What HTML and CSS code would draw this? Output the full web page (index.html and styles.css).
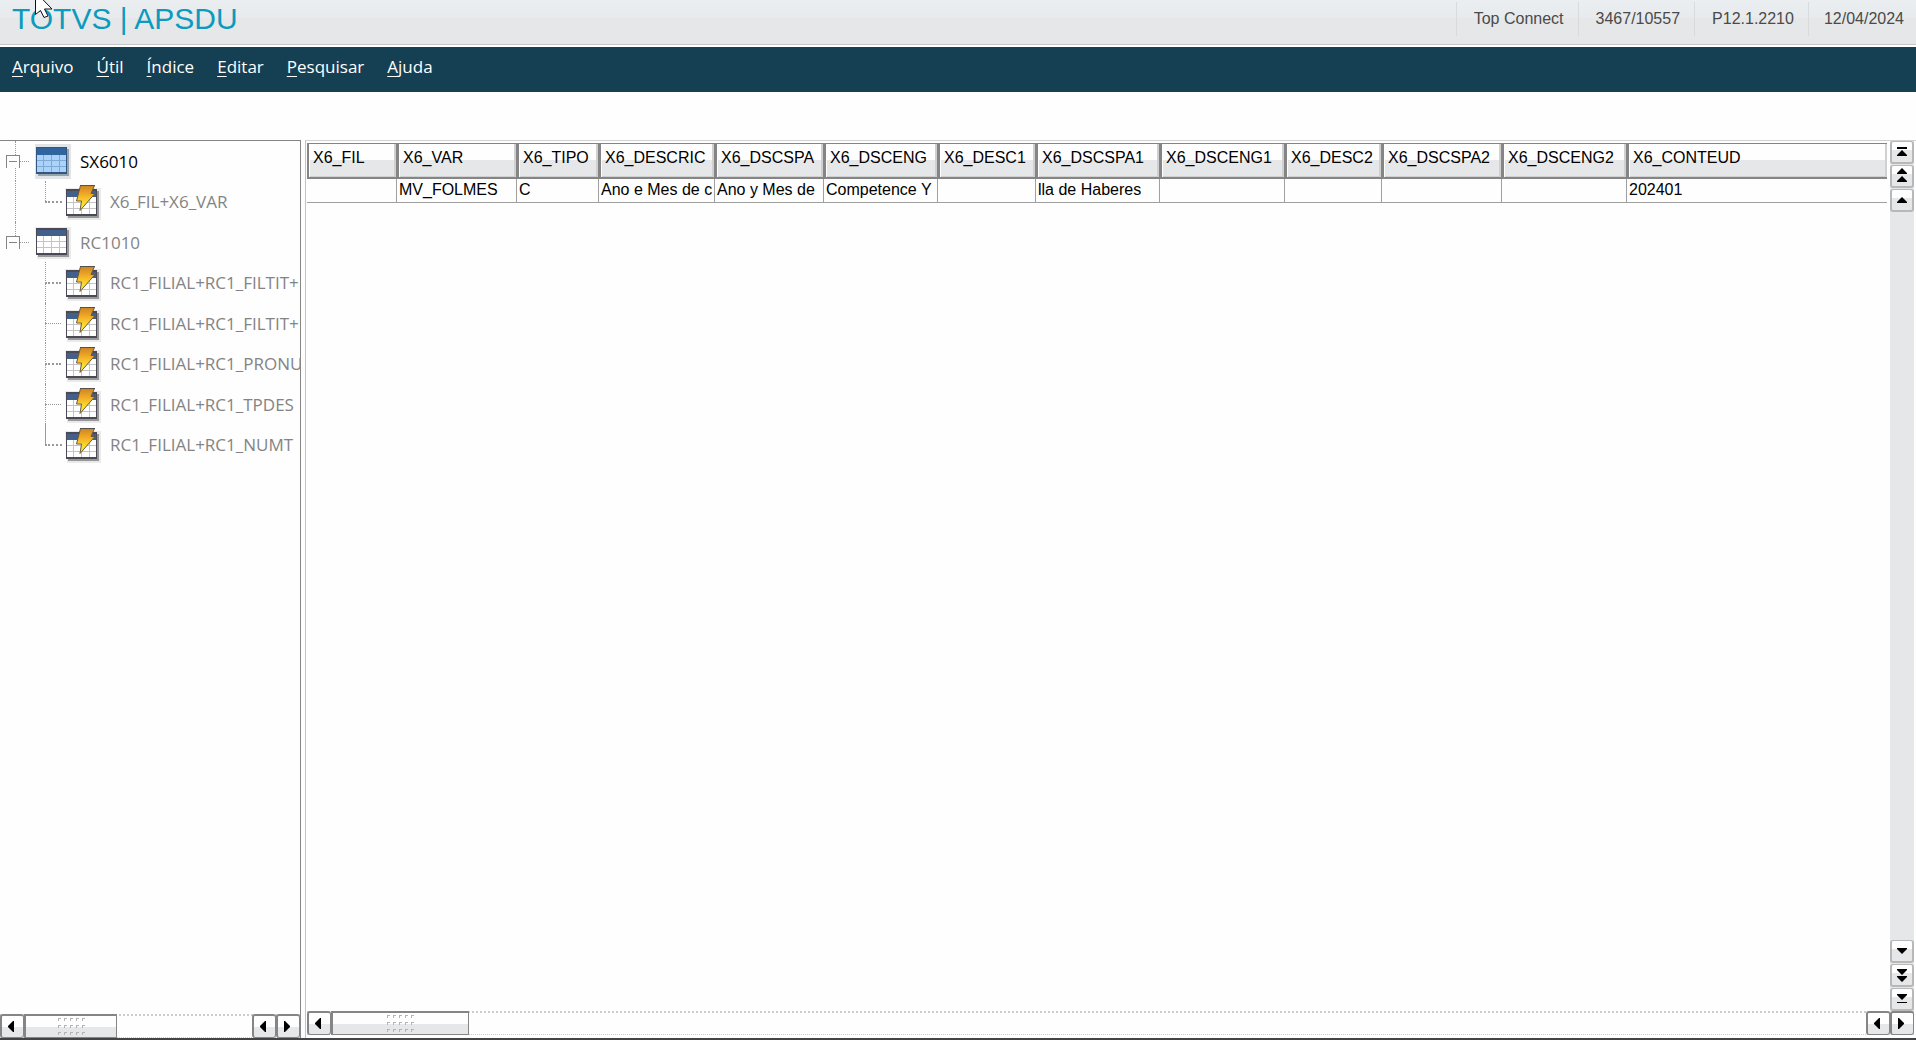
FILE: index.html
```
<!DOCTYPE html>
<html lang="pt-BR">
<head>
    <meta charset="UTF-8">
    <meta name="viewport" content="width=device-width, initial-scale=1.0">
    <title>TOTVS | APSDU</title>
    <link rel="stylesheet" href="styles.css">
</head>
<body>
    <!-- Shared icons -->
    <svg class="sprite" aria-hidden="true">
        <defs>
            <linearGradient id="boltFill" x1="0" y1="0" x2="0" y2="1">
                <stop offset="0" stop-color="#cd8423"/>
                <stop offset="0.35" stop-color="#f0aa26"/>
                <stop offset="0.7" stop-color="#fddc2c"/>
                <stop offset="1" stop-color="#f7ee4c"/>
            </linearGradient>
            <pattern id="grip" width="6" height="7" patternUnits="userSpaceOnUse">
                <path d="M0 0h3v1H1v2H0z" fill="#b4b4b4"/>
            </pattern>
        </defs>
        <symbol id="grid" viewBox="0 0 36 36">
            <path d="M0 3h36v32H2z" fill="#000" opacity="0.08"/>
            <path d="M3 6h31v27H3z" fill="#000" opacity="0.35"/>
            <path d="M1 4h31v27H1z" fill="#4a4a56"/>
            <path d="M2 6h29v6H2z" fill="#435f8c"/>
            <path d="M2 12h29v17H2z" fill="#fff"/>
            <path d="M2 17.500h29M2 23.500h29M8.500 12v17M16.500 12v17M24.500 12v17" stroke="#c4c4c4" fill="none"/>
        </symbol>
        <symbol id="gridActive" viewBox="0 0 36 36">
            <path d="M0 1h36v35H0z" fill="#e2e5e7"/>
            <path d="M3 6h31v27H3z" fill="#98a2ab"/>
            <path d="M1 4h31v27H1z" fill="#31567f"/>
            <path d="M2 5h29v7H2z" fill="#2f649f"/>
            <path d="M2 12h29v17H2z" fill="#abd2fb"/>
            <path d="M2 17.500h29M2 23.500h29M8.500 12v17M16.500 12v17M24.500 12v17" stroke="#7fa8d2" fill="none"/>
        </symbol>
        <symbol id="gridBolt" viewBox="0 0 36 36">
            <use href="#grid"/>
            <path d="M15.500 0.500h14l-3.500 8h4L15 25.500l1.500-9.500h-5z" fill="url(#boltFill)" stroke="#6b5a3a"/>
            <path d="M15 0.500h15" stroke="#55504c"/>
        </symbol>
    </svg>

    <header class="topbar">
        <h1>TOTVS | APSDU</h1>
        <ul class="status">
            <li>Top Connect</li>
            <li>3467/10557</li>
            <li>P12.1.2210</li>
            <li>12/04/2024</li>
        </ul>
    </header>

    <nav class="menu">
        <a href="#"><u>A</u>rquivo</a>
        <a href="#"><u>Ú</u>til</a>
        <a href="#"><u>Í</u>ndice</a>
        <a href="#"><u>E</u>ditar</a>
        <a href="#"><u>P</u>esquisar</a>
        <a href="#"><u>A</u>juda</a>
    </nav>

    <main class="workspace">
        <aside class="sidebar">
            <ul class="tree">
                <li class="root active"><button class="toggle" aria-label="Recolher SX6010"></button><svg class="icon"><use href="#gridActive"/></svg><span>SX6010</span></li>
                <li class="child last"><svg class="icon"><use href="#gridBolt"/></svg><span>X6_FIL+X6_VAR</span></li>
                <li class="root end"><button class="toggle" aria-label="Recolher RC1010"></button><svg class="icon"><use href="#grid"/></svg><span>RC1010</span></li>
                <li class="child"><svg class="icon"><use href="#gridBolt"/></svg><span>RC1_FILIAL+RC1_FILTIT+</span></li>
                <li class="child"><svg class="icon"><use href="#gridBolt"/></svg><span>RC1_FILIAL+RC1_FILTIT+</span></li>
                <li class="child"><svg class="icon"><use href="#gridBolt"/></svg><span>RC1_FILIAL+RC1_PRONU</span></li>
                <li class="child"><svg class="icon"><use href="#gridBolt"/></svg><span>RC1_FILIAL+RC1_TPDES</span></li>
                <li class="child last"><svg class="icon"><use href="#gridBolt"/></svg><span>RC1_FILIAL+RC1_NUMT</span></li>
            </ul>
            <div class="hscroll">
                <button aria-label="Esquerda"><svg viewBox="0 0 20 20"><path d="M12 4v11h-1L6 10V9l5-5z"/></svg></button>
                <div class="thumb"><svg class="grip"><rect width="27" height="17" fill="url(#grip)"/></svg></div>
                <button class="push" aria-label="Esquerda"><svg viewBox="0 0 20 20"><path d="M12 4v11h-1L6 10V9l5-5z"/></svg></button>
                <button aria-label="Direita"><svg viewBox="0 0 20 20"><path d="M6 4v11h1l5-5V9L7 4z"/></svg></button>
            </div>
        </aside>

        <section class="browse">
            <div class="browse-body">
                <div class="table-wrap">
                    <table>
                        <colgroup>
                            <col class="c1"><col class="c2"><col class="c3"><col class="c4"><col class="c5"><col class="c6"><col class="c7">
                            <col class="c8"><col class="c9"><col class="c10"><col class="c11"><col class="c12"><col>
                        </colgroup>
                        <thead>
                            <tr>
                                <th>X6_FIL</th>
                                <th>X6_VAR</th>
                                <th>X6_TIPO</th>
                                <th>X6_DESCRIC</th>
                                <th>X6_DSCSPA</th>
                                <th>X6_DSCENG</th>
                                <th>X6_DESC1</th>
                                <th>X6_DSCSPA1</th>
                                <th>X6_DSCENG1</th>
                                <th>X6_DESC2</th>
                                <th>X6_DSCSPA2</th>
                                <th>X6_DSCENG2</th>
                                <th>X6_CONTEUD</th>
                            </tr>
                        </thead>
                        <tbody>
                            <tr>
                                <td></td>
                                <td>MV_FOLMES</td>
                                <td>C</td>
                                <td>Ano e Mes de c</td>
                                <td>Ano y Mes de</td>
                                <td>Competence Y</td>
                                <td></td>
                                <td>lla de Haberes</td>
                                <td></td>
                                <td></td>
                                <td></td>
                                <td></td>
                                <td>202401</td>
                            </tr>
                        </tbody>
                    </table>
                </div>
                <div class="vscroll">
                    <button aria-label="Primeiro"><svg viewBox="0 0 20 20"><path d="M5 5h10v2H5zM10 8l5 5v1H5v-1z"/></svg></button>
                    <button aria-label="Página anterior"><svg viewBox="0 0 20 20"><path d="M10 2l5 5v1H5V7zM10 10l5 5v1H5v-1z"/></svg></button>
                    <button aria-label="Anterior"><svg viewBox="0 0 20 20"><path d="M10 7l5 5v1H5v-1z"/></svg></button>
                    <button class="push" aria-label="Próximo"><svg viewBox="0 0 20 20"><path d="M5 7h10v1l-5 5-5-5z"/></svg></button>
                    <button aria-label="Próxima página"><svg viewBox="0 0 20 20"><path d="M5 4h10v1l-5 5-5-5zM5 11h10v1l-5 5-5-5z"/></svg></button>
                    <button aria-label="Último"><svg viewBox="0 0 20 20"><path d="M5 5h10v1l-5 5-5-5zM5 13h10v1H5z"/></svg></button>
                </div>
            </div>
            <div class="hscroll">
                <button aria-label="Esquerda"><svg viewBox="0 0 20 20"><path d="M12 4v11h-1L6 10V9l5-5z"/></svg></button>
                <div class="thumb wide"><svg class="grip"><rect width="27" height="17" fill="url(#grip)"/></svg></div>
                <button class="push" aria-label="Esquerda"><svg viewBox="0 0 20 20"><path d="M12 4v11h-1L6 10V9l5-5z"/></svg></button>
                <button aria-label="Direita"><svg viewBox="0 0 20 20"><path d="M6 4v11h1l5-5V9L7 4z"/></svg></button>
            </div>
        </section>
    </main>

    <svg class="cursor" viewBox="0 0 18 18" aria-hidden="true"><path d="M0.500 -8v22.500l5-4 3.500 7 4-1.500-3.500-7h7.500z" fill="#fff" stroke="#111"/></svg>
</body>
</html>
```

FILE: styles.css
```
* {
    margin: 0;
    padding: 0;
    box-sizing: border-box;
}

body {
    height: 100vh;
    display: flex;
    flex-direction: column;
    overflow: hidden;
    background: #fefefe;
    border-bottom: 2px solid #444;
    font-family: "Liberation Sans", Arial, sans-serif;
    font-size: 16px;
    color: #000;
}

ul {
    list-style: none;
}

.sprite {
    position: absolute;
    width: 0;
    height: 0;
}

.cursor {
    position: absolute;
    top: 0;
    left: 35px;
    width: 18px;
    height: 18px;
}

/* Top bar */
.topbar {
    height: 47px;
    flex: none;
    display: flex;
    justify-content: space-between;
    background: linear-gradient(#eaeef1, #e8ebed 18px, #e6e7e8 18px);
    border-bottom: 2px solid #fff;
    box-shadow: inset 0 -1px #c3c7cc;
}

.topbar h1 {
    padding-left: 12px;
    font-size: 30px;
    font-weight: normal;
    line-height: 38px;
    color: #0c9abe;
}

.status {
    display: flex;
    padding-top: 2px;
    color: #4a4a4a;
}

.status li {
    height: 34px;
    padding: 0 14px 0 17px;
    border-left: 1px solid #d8dbdd;
    line-height: 34px;
}

.status li:last-child {
    padding: 0 12px 0 15px;
}

/* Menu */
.menu {
    height: 45px;
    flex: none;
    display: flex;
    gap: 23px;
    padding-left: 12px;
    background: #154053;
    font-family: "Open Sans", "Noto Sans", sans-serif;
    font-size: 17px;
    line-height: 40px;
}

.menu a {
    color: #fff;
    text-decoration: none;
}

.menu u {
    text-underline-offset: 3px;
}

/* Work area */
.workspace {
    flex: 1;
    display: flex;
    gap: 4px;
    min-height: 0;
    padding-top: 48px;
}

.sidebar {
    width: 301px;
    flex: none;
    display: flex;
    flex-direction: column;
    border-top: 1px solid #858585;
    border-right: 1px solid #858585;
}

.tree {
    flex: 1;
    overflow: hidden;
    font-family: "Open Sans", "Noto Sans", sans-serif;
    font-size: 17px;
    color: #848484;
}

.tree li {
    position: relative;
    display: flex;
    align-items: center;
    height: 40px;
    white-space: nowrap;
}

.tree li:nth-child(even) {
    height: 41px;
}

.tree .active {
    color: #000;
}

.icon {
    width: 36px;
    height: 36px;
    flex: none;
    margin-right: 9px;
}

.child .icon {
    margin-top: 3px;
}

.root {
    padding-left: 6px;
}

.child {
    padding-left: 65px;
}

.toggle {
    position: relative;
    z-index: 1;
    width: 14px;
    height: 13px;
    margin-right: 15px;
    background: #fefefe;
    border: 1px solid #858585;
    border-bottom: none;
}

.toggle::after {
    content: "";
    display: block;
    height: 1px;
    margin: 0 2px;
    background: #858585;
}

/* Dotted guide lines */
.tree li::before,
.tree li::after {
    content: "";
    position: absolute;
}

.tree li::before {
    left: 15px;
    top: 0;
    bottom: 0;
    border-left: 1px dotted #999;
}

.tree .end::before {
    bottom: 20px;
}

.tree .end ~ li::before {
    left: 45px;
}

.tree li::after {
    left: 20px;
    width: 9px;
    top: 20px;
    border-top: 1px dotted #999;
}

.tree .child::after {
    left: 45px;
    width: 16px;
    top: 0;
    height: 20px;
    border-top: none;
    border-bottom: 2px dotted #999;
}

.tree .child:nth-child(odd)::after {
    border-bottom-width: 1px;
}

.tree .last::after {
    border-left: 1px dotted #999;
}

.tree .end ~ .last::before {
    bottom: 20px;
}

/* Browse */
.browse {
    flex: 1;
    display: flex;
    flex-direction: column;
    min-width: 0;
    padding: 0 2px 3px 1px;
    border-left: 1px solid #c4c4c4;
    border-top: 1px solid #d0d0d0;
}

.browse-body {
    flex: 1;
    display: flex;
    gap: 3px;
    min-height: 0;
}

.table-wrap {
    flex: 1;
    min-width: 0;
    padding-top: 2px;
}

table {
    width: 100%;
    table-layout: fixed;
    border-collapse: separate;
    border-spacing: 0;
}

.c1 { width: 89px; }
.c2 { width: 120px; }
.c3 { width: 82px; }
.c4 { width: 116px; }
.c5 { width: 109px; }
.c6 { width: 114px; }
.c7 { width: 98px; }
.c8 { width: 124px; }
.c9 { width: 125px; }
.c10 { width: 97px; }
.c11 { width: 120px; }
.c12 { width: 125px; }

th,
td {
    overflow: hidden;
    white-space: nowrap;
    font-weight: normal;
    text-align: left;
}

th {
    height: 36px;
    padding: 0 0 6px 4px;
    background: linear-gradient(#fefefe 16px, #e6e7e8 16px);
    border: solid #858585;
    border-width: 1px 0 2px 3px;
    box-shadow: inset 1px 0 #fff, inset -2px -1px #d0d0d0;
}

th:first-child {
    border-left-width: 2px;
}

td {
    height: 24px;
    padding: 0 2px 2px 2px;
    border-left: 1px solid #a0a0a0;
    border-bottom: 1px solid #a0a0a0;
}

td:first-child {
    border-left: none;
}

/* Scroll bars */
.vscroll {
    width: 24px;
    display: flex;
    flex-direction: column;
    gap: 1px;
    background: #e6e7e8;
}

.vscroll button {
    width: 24px;
    height: 23px;
    background: linear-gradient(#fefefe 8px, #e6e7e8 8px);
    border: 2px solid #b8b8b8;
    border-top-width: 1px;
    border-radius: 3px;
}

.hscroll {
    display: flex;
    height: 24px;
    border-top: 2px dotted #ccc;
    border-bottom: 1px dotted #ccc;
}

.hscroll button,
.thumb {
    width: 24px;
    height: 24px;
    margin-top: -2px;
    background: linear-gradient(#fefefe 11px, #e6e7e8 11px);
    border: 2px solid #858585;
    border-width: 2px 1px 1px 2px;
    border-radius: 3px;
}

.vscroll .push {
    margin-top: auto;
}

.hscroll .push {
    margin-left: auto;
}

button svg {
    display: block;
    width: 20px;
    height: 20px;
}

.thumb {
    width: 93px;
    display: flex;
    align-items: center;
    justify-content: center;
    border-radius: 0;
}

.thumb.wide {
    width: 138px;
}

.grip {
    width: 27px;
    height: 17px;
}
```
